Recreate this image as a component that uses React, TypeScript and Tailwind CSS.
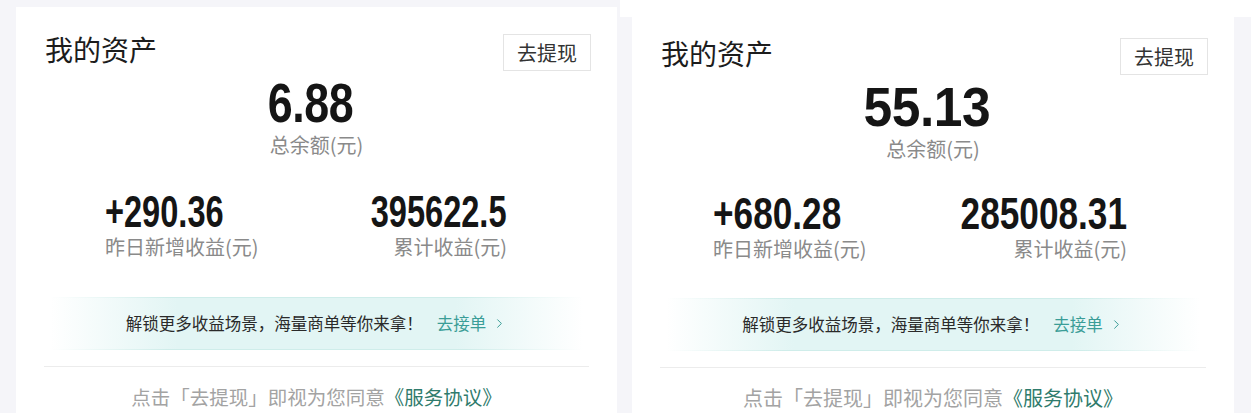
import { ChevronRight } from "lucide-react";

const CJK = "font-['Noto_Sans_CJK_SC','Noto_Sans',sans-serif]";
const NUM = "font-['Liberation_Sans',Arial,sans-serif] font-bold";

interface AssetCardProps {
  total: string;
  yesterday: string;
  cumulative: string;
  topPad: string;
  totalScale: string;
  statScale: string;
  statsGap: string;
  statsPad: string;
  bannerGap: string;
  footerSize: string;
}

const AssetCard = ({
  total,
  yesterday,
  cumulative,
  topPad,
  totalScale,
  statScale,
  statsGap,
  statsPad,
  bannerGap,
  footerSize,
}: AssetCardProps) => {
  return (
    <div className={`h-full w-full bg-white ${CJK} ${topPad}`}>
      {/* header */}
      <div className="flex items-center justify-between pl-[29px] pr-[26px]">
        <h2 className="mb-[7px] text-[28px] leading-[28px] text-[#1c1c1c]">
          我的资产
        </h2>
        <button className="h-[37px] border border-[#e4e4e4] px-[13px] text-[20px] leading-[20px] text-[#333]">
          去提现
        </button>
      </div>

      {/* balance */}
      <div className="mt-[7px] flex flex-col items-center">
        <div
          className={`${NUM} ${totalScale} mr-[12px] origin-center text-[56px] leading-[50px] tracking-[-0.5px] text-[#151515]`}
        >
          {total}
        </div>
        <div className="mt-[3px] text-[20px] leading-[28px] text-[#8a8a8a]">
          总余额(元)
        </div>
      </div>

      {/* stats */}
      <div className={`flex justify-between ${statsGap} ${statsPad}`}>
        <div className="flex flex-col items-start">
          <div
            className={`${NUM} ${statScale} origin-left text-[44px] leading-[40px] text-[#151515]`}
          >
            {yesterday}
          </div>
          <div className="mt-[1px] text-[20px] leading-[28px] text-[#8a8a8a]">
            昨日新增收益(元)
          </div>
        </div>
        <div className="flex flex-col items-end">
          <div
            className={`${NUM} ${statScale} origin-right text-[44px] leading-[40px] text-[#151515]`}
          >
            {cumulative}
          </div>
          <div className="mt-[1px] text-[20px] leading-[28px] text-[#8a8a8a]">
            累计收益(元)
          </div>
        </div>
      </div>

      {/* banner */}
      <div
        className={`mx-[34px] ${bannerGap} bg-[linear-gradient(90deg,rgba(255,255,255,0),#cfedea_22%,#cfedea_78%,rgba(255,255,255,0))] py-px`}
      >
        <div className="flex h-[51px] items-center justify-center bg-[linear-gradient(90deg,#fff,#e2f5f4_24%,#e2f5f4_76%,#fff)]">
          <span className="text-[16.5px] text-[#2a2a2a]">
            解锁更多收益场景，海量商单等你来拿！
          </span>
          <span className="ml-[14px] flex items-center text-[16.5px] text-[#3a9d97]">
            去接单
            <ChevronRight className="ml-[6px]" size={15} strokeWidth={1.6} />
          </span>
        </div>
      </div>

      <div className="mx-[28px] mt-[16px] h-px bg-[#ececec]" />

      <div
        className={`mt-[16px] text-center ${footerSize} leading-[28px] text-[#a3a3a3]`}
      >
        点击「去提现」即视为您同意
        <span className="text-[#2f7b6c]">《服务协议》</span>
      </div>
    </div>
  );
};

export default function App() {
  return (
    <div className="flex h-[413px] w-[1251px] overflow-hidden">
      <div className="flex h-full w-[620px] bg-[#f5f5f9] pl-[16px] pr-[3px] pt-[7px]">
        <AssetCard
          total="6.88"
          yesterday="+290.36"
          cumulative="395622.5"
          topPad="pt-[27px]"
          totalScale="scale-x-[0.8]"
          statScale="scale-x-[0.74]"
          statsGap="mt-[33px]"
          statsPad="pl-[89px] pr-[110px]"
          bannerGap="mt-[36px]"
          footerSize="text-[19.5px]"
        />
      </div>
      <div className="flex h-full w-[631px] bg-[linear-gradient(to_bottom,#fff_17px,#f5f5f9_17px)] pl-[12px] pr-[17px]">
        <AssetCard
          total="55.13"
          yesterday="+680.28"
          cumulative="285008.31"
          topPad="pt-[38px]"
          totalScale="scale-x-[0.92]"
          statScale="scale-x-[0.8]"
          statsGap="mt-[31px]"
          statsPad="pl-[81px] pr-[107px]"
          bannerGap="mt-[35px]"
          footerSize="text-[20px]"
        />
      </div>
    </div>
  );
}
